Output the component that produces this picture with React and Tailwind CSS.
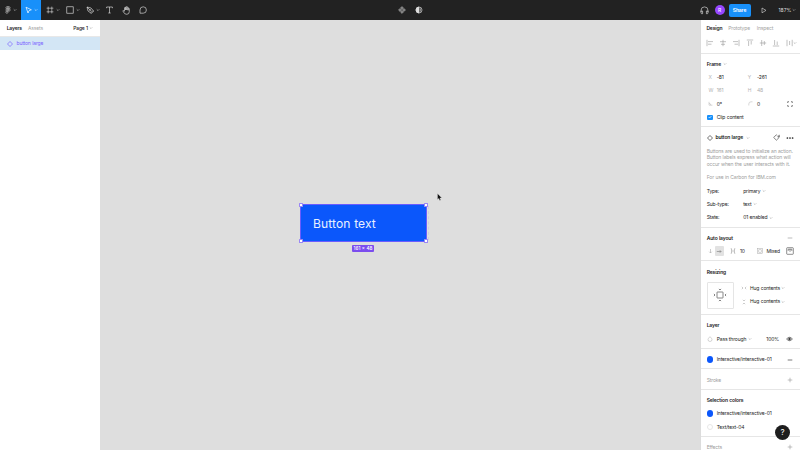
import React from "react";

function Svg({ w = 8, h = 8, vb, className = "", sw = 0.5, fill = "none", children }) {
  return (
    <svg width={w} height={h} viewBox={vb || `0 0 ${w} ${h}`} fill={fill} stroke="currentColor" strokeWidth={sw} className={`shrink-0 ${className}`}>
      {children}
    </svg>
  );
}

const Chevron = ({ className = "text-[#999]" }) => (
  <Svg w={4} h={4} sw={0.5} className={className}><path d="M.7 1.3 2 2.6 3.3 1.3" /></Svg>
);

const Diamond = ({ className = "", size = 6 }) => (
  <Svg w={size} h={size} vb="0 0 6 6" sw={0.7} className={className}><path d="M3 .5 5.5 3 3 5.5.5 3Z" /></Svg>
);

function Tool({ width, chevron = true, children }) {
  return (
    <div className={`flex h-full items-center justify-center gap-[2px] ${width}`}>
      {children}
      {chevron && <Chevron className="text-[#d8d8d8]" />}
    </div>
  );
}

function Toolbar() {
  return (
    <header className="flex h-5 shrink-0 items-center bg-[#222] text-[#dedede]">
      <Tool width="w-[21px]">
        <Svg w={6} h={8} sw={0.8} className="text-[#aaa]">
          <path d="M3 .7H2a1.1 1.1 0 0 0 0 2.2h1Zm0 2.2H2a1.1 1.1 0 0 0 0 2.2h1Zm0 2.2H2a1.1 1.1 0 1 0 1 1.1ZM3 .7h1a1.1 1.1 0 0 1 0 2.2H3Z" />
          <circle cx="4.1" cy="4" r="1.1" />
        </Svg>
      </Tool>
      <div className="flex h-full w-5 items-center justify-center gap-[2px] bg-[#1890fa] text-white">
        <Svg w={7} h={8} sw={0.7}><path d="m1 1.2 5.4 2.6-2.4.8-1 2.4Z" /></Svg>
        <Chevron className="text-white" />
      </div>
      <Tool width="w-[23px]">
        <Svg w={8} h={8} sw={0.6}><path d="M2.2.6v6.8M5.8.6v6.8M.6 2.2h6.8M.6 5.8h6.8" /></Svg>
      </Tool>
      <Tool width="w-[17px]">
        <Svg w={8} h={8} sw={0.65}><rect x=".8" y=".8" width="6.4" height="6.4" /></Svg>
      </Tool>
      <Tool width="w-[23px]">
        <Svg w={8} h={8} sw={0.65}>
          <path d="m1 1 1 4 2.6 1.8L7 4.4 5 2Z M1 1l3 3M4.6 6.8 5.2 7.5 7.7 5 7 4.4" />
          <circle cx="4.3" cy="4.2" r=".6" />
        </Svg>
      </Tool>
      <Tool width="w-[10px]" chevron={false}>
        <Svg w={7} h={8} sw={0.65}><path d="M.6 2.2V1h5.8v1.2M3.5 1v6M2.3 7h2.4" /></Svg>
      </Tool>
      <Tool width="w-[24px]" chevron={false}>
        <Svg w={9} h={9} sw={0.65}>
          <path d="M2.5 5V2q0-.6.6-.6t.6.6V4 1.2q0-.6.6-.6t.6.6V4 1.6q0-.6.6-.6t.6.6v2.7V2.8q0-.6.6-.6t.6.6V5.5Q7.3 8.3 4.8 8.3T1.5 6L.8 4.8q.5-.8 1.7.6" />
        </Svg>
      </Tool>
      <Tool width="w-[9px]" chevron={false}>
        <Svg w={8} h={8} sw={0.65}><path d="M1 7.2V4A3.2 3.2 0 1 1 4.2 7.2Z" /></Svg>
      </Tool>
      <div className="flex flex-1 items-center pl-[251px]">
        <Svg w={8} h={8} sw={0.45} className="text-[#999]">
          <path fill="#888" d="m4 .4 1.6 1.6L4 3.6 2.4 2ZM4 4.4l1.6 1.6L4 7.6 2.4 6ZM2 2.4l1.6 1.6L2 5.6.4 4ZM6 2.4l1.6 1.6L6 5.6 4.4 4Z" />
        </Svg>
        <Svg w={8} h={8} sw={0.65} className="ml-[9px]">
          <circle cx="4" cy="4" r="3" /><path fill="#ddd" d="M4 1a3 3 0 0 0 0 6Z" /><path d="M5.3 2.3v3.4" />
        </Svg>
      </div>
      <div className="flex w-[100.5px] items-center">
        <Svg w={9} h={9} sw={0.65}>
          <path d="M1 6V4.4a3.5 3.5 0 0 1 7 0V6M1 5h1.6v2.7H1.5L1 7ZM8 5H6.4v2.7h1.1L8 7Z" />
        </Svg>
        <div className="ml-[6px] flex size-[10px] items-center justify-center rounded-full bg-[#9747ff] text-[5px] text-white">R</div>
        <div className="ml-[4px] flex h-[13px] w-[22px] items-center justify-center rounded-[2px] bg-[#1890fa] text-[5px] font-semibold tracking-[-0.1px] text-white">Share</div>
        <Svg w={6} h={7} sw={0.6} className="ml-[10px]"><path d="M1 1v4.8l4-2.4Z" /></Svg>
        <span className="ml-[12px] text-[5px] tracking-normal">187%</span>
        <Chevron className="ml-[1px] text-[#c8c8c8]" />
      </div>
    </header>
  );
}

function LeftPanel() {
  return (
    <aside className="w-[100px] shrink-0 bg-white">
      <div className="flex h-[17px] items-center border-b border-[#e8e8e8] pl-[6.7px] pr-[7px]">
        <span className="w-[21.3px] font-semibold">Layers</span>
        <span className="text-[#a6a6a6]">Assets</span>
        <span className="ml-auto mr-[1px] font-medium">Page 1</span>
        <Chevron />
      </div>
      <div className="flex h-[13px] items-center gap-[3.5px] bg-[#d3e6f5] pl-[7px] text-[#7b61ff]">
        <Diamond />
        <span>button large</span>
      </div>
    </aside>
  );
}

function Canvas() {
  return (
    <main className="relative flex-1 overflow-hidden bg-[#dedede]">
      <div className="absolute left-[200px] top-[184px] flex h-[38px] w-[127px] items-center border border-[#6a5cff] bg-[#0b57fb] pl-[12px] pt-[2px] text-[12.1px] tracking-[0.08px] text-[#e9f0ff]">
        Button text
        <i className="absolute -left-[2px] -top-[2px] size-[4px] rounded-[0.5px] border border-[#9a87f5] bg-white" />
        <i className="absolute -right-[2px] -top-[2px] size-[4px] rounded-[0.5px] border border-[#9a87f5] bg-white" />
        <i className="absolute -bottom-[2px] -left-[2px] size-[4px] rounded-[0.5px] border border-[#9a87f5] bg-white" />
        <i className="absolute -bottom-[2px] -right-[2px] size-[4px] rounded-[0.5px] border border-[#9a87f5] bg-white" />
      </div>
      <div className="absolute left-[328px] top-[186px] h-[34px] w-px border-r border-dashed border-[#d0cbdf]" />
      <div className="absolute left-[252px] top-[225px] flex h-[7px] w-[22px] items-center justify-center rounded-[1px] bg-[#7b4dee] text-[4.7px] font-medium tracking-normal text-white">161 × 48</div>
      <svg className="absolute left-[337px] top-[173px]" width="6" height="8" viewBox="0 0 6 8">
        <path d="M.5.5v6l1.3-1.1.9 2.1 1.1-.5-.9-2h1.9Z" fill="#111" stroke="#eee" strokeWidth=".3" />
      </svg>
    </main>
  );
}

function Section({ className, children }) {
  return <section className={`border-b border-[#e6e6e6] pl-[5.7px] ${className}`}>{children}</section>;
}

function Row({ className = "", children }) {
  return <div className={`flex h-[13.33px] items-center ${className}`}>{children}</div>;
}

const Slot = ({ auto = true, children }) => <span className={`flex w-[20px] shrink-0 items-center justify-center ${auto ? "ml-auto" : ""}`}>{children}</span>;
const Minus = () => <Svg w={6} h={6} sw={0.7} className="text-[#444]"><path d="M.7 3h4.6" /></Svg>;
const Plus = () => <Svg w={6} h={6} sw={0.6} className="text-[#999]"><path d="M.7 3h4.6M3 .7v4.6" /></Svg>;

function Field({ a, av, b, bv, muted, end }) {
  return (
    <Row className={muted ? "text-[#adadad]" : ""}>
      <span className="flex w-[10px] pl-[1.7px] text-[#b3b3b3]">{a}</span>
      <span className="w-[31px]">{av}</span>
      <span className="flex w-[9.2px] text-[#b3b3b3]">{b}</span>
      <span>{bv}</span>
      {end && <Slot>{end}</Slot>}
    </Row>
  );
}

const ALIGN = [
  "M1 .8v6.4M2 2.6h5M2 5.2h3.5",
  "M4 .8v6.4M1 2.7h6M2 5.3h4",
  "M7 .8v6.4M6 2.6H1M6 5.2H2.5",
  "M.8 1h6.4M2.6 2v5M5.2 2v3.5",
  "M.8 4h6.4M2.7 1v6M5.3 2v4",
  "M.8 7h6.4M2.6 6V1M5.2 6V2.5",
  "M1 .8v6.4M6.2 .8v6.4M3.6 2v4",
];

const PROPS = [["Type:", "primary"], ["Sub-type:", "text"], ["State:", "01 enabled"]];

function RightPanel() {
  return (
    <aside className="w-[100px] shrink-0 overflow-hidden border-l border-[#dcdcdc] bg-white">
      <div className="flex h-[16.5px] items-center pl-[5.4px] text-[#a3a3a3]">
        <span className="w-[21.8px] font-semibold text-[#222]">Design</span>
        <span className="w-[28.6px]">Prototype</span>
        <span>Inspect</span>
      </div>
      <div className="flex h-[17.3px] items-start border-b border-[#e6e6e6] pl-[4.7px] pt-[2.9px] text-[#999]">
        {ALIGN.map((d) => (
          <span key={d} className="w-[13.33px] shrink-0"><Svg w={8} h={8} sw={0.6}><path d={d} /></Svg></span>
        ))}
        <span className="-ml-[5.8px] pt-[2px]"><Chevron /></span>
      </div>

      <Section className="h-[73.6px] pt-[3.5px]">
        <Row className="font-semibold">Frame <span className="ml-[1.5px]"><Chevron /></span></Row>
        <Field a="X" av="-81" b="Y" bv="-261" />
        <Field a="W" av="161" b="H" bv="48" muted />
        <Field
          a={<Svg w={5} h={5}><path d="M1 .8v3.4h3.4M1 2.4a1.8 1.8 0 0 1 1.8 1.8" /></Svg>}
          av="0°"
          b={<Svg w={5} h={5}><path d="M.8 4.5V3A2.2 2.2 0 0 1 3 .8h1.5" /></Svg>}
          bv="0"
          end={<Svg w={6} h={6} sw={0.65} className="text-[#444]"><path d="M.7 2V.7H2M4 .7h1.3V2M5.3 4v1.3H4M2 5.3H.7V4" /></Svg>}
        />
        <Row>
          <span className="ml-[0.8px] flex size-[5.5px] items-center justify-center rounded-[1px] bg-[#1890fa] text-white">
            <Svg w={4} h={4} sw={0.7}><path d="m.6 2 1 1L3.4 1.1" /></Svg>
          </span>
          <span className="ml-[3.7px]">Clip content</span>
        </Row>
      </Section>

      <Section className="h-[100.3px] pt-[3.5px]">
        <Row>
          <Diamond className="text-[#333]" />
          <span className="ml-[2.8px] mr-[3px] font-semibold">button large</span>
          <Chevron />
          <Svg w={7} h={7} sw={0.6} className="ml-auto text-[#333]">
            <path d="M3.9 1.1 3.3.8.7 3.5l2.7 2.7L6 3.6l-.3-.7M4.4 2.7h1.9V.8M6.2 2.6 5 1.3" />
          </Svg>
          <Slot auto={false}><Svg w={8} h={4} fill="#222" sw={0}><circle cx="1.4" cy="2" r=".85" /><circle cx="4" cy="2" r=".85" /><circle cx="6.6" cy="2" r=".85" /></Svg></Slot>
        </Row>
        <div className="h-[40px] whitespace-nowrap pt-[3.5px] leading-[6.67px] text-[#a0a0a0]">
          <p>Buttons are used to initialize an action.</p>
          <p>Button labels express what action will</p>
          <p>occur when the user interacts with it.</p>
          <p className="mt-[6.67px]">For use in Carbon for IBM.com</p>
        </div>
        {PROPS.map(([k, v]) => (
          <Row key={k}><span className="w-[36.5px]">{k}</span><span className="mr-[1.5px]">{v}</span><Chevron /></Row>
        ))}
      </Section>

      <Section className="h-[33.7px] pt-[3.5px]">
        <Row className="font-semibold">Auto layout<Slot><span className="opacity-50"><Minus /></span></Slot></Row>
        <Row>
          <span className="flex w-[8px] pl-[1px]"><Svg w={5} h={6} className="text-[#999]"><path d="M2.5 1v3.8M1.2 3.7l1.3 1.3 1.3-1.3" /></Svg></span>
          <span className="flex size-[10px] items-center justify-center rounded-[1px] bg-[#e2e2e2]"><Svg w={6} h={5} className="text-[#666]"><path d="M.8 2.5H5M3.8 1.2l1.3 1.3-1.3 1.3" /></Svg></span>
          <Svg w={6} h={6} className="ml-[6px] text-[#888]"><path d="M.7.7h.8v4.6H.7M5.3.7h-.8v4.6h.8M3 1.8v2.4" /></Svg>
          <span className="ml-[3.6px]">10</span>
          <Svg w={6} h={6} className="ml-[12px] text-[#aaa]"><rect x=".5" y=".5" width="5" height="5" /><rect x="1.8" y="1.8" width="2.4" height="2.4" /></Svg>
          <span className="ml-[3.6px]">Mixed</span>
          <Slot><Svg w={8} h={8} sw={0.6} className="text-[#444]"><rect x=".7" y=".7" width="6.6" height="6.6" rx=".6" /><path d="M2.2 2.2v1.7M4 2.2v2.6M5.8 2.2v1.7M2.2 2.2h3.6" /></Svg></Slot>
        </Row>
      </Section>

      <Section className="h-[53.9px] pt-[4px]">
        <Row className="font-semibold">Resizing</Row>
        <div className="mt-[2.8px] flex">
          <div className="flex h-[27.5px] w-[27.5px] items-center justify-center rounded-[1px] border border-[#e5e5e5]">
            <Svg w={14} h={14} sw={0.65} className="text-[#444]">
              <rect x="4" y="4" width="6" height="6" rx=".4" />
              <path d="m5.9.9 1.1 1.1L8.1.9M5.9 13.1 7 12l1.1 1.1M.9 5.9 2 7 .9 8.1M13.1 5.9 12 7l1.1 1.1" />
            </Svg>
          </div>
          <div className="ml-[6.7px] pt-[0.3px]">
            <Row>
              <Svg w={6} h={6} className="text-[#999]"><path d="m.8 1.8 1.2 1.2L.8 4.2M5.2 1.8 4 3l1.2 1.2" /></Svg>
              <span className="ml-[3px] mr-[1.5px]">Hug contents</span><Chevron />
            </Row>
            <Row>
              <Svg w={6} h={6} className="text-[#999]"><path d="M1.8.8 3 2 4.2.8M1.8 5.2 3 4l1.2 1.2" /></Svg>
              <span className="ml-[3px] mr-[1.5px]">Hug contents</span><Chevron />
            </Row>
          </div>
        </div>
      </Section>

      <Section className="h-[33.7px] pt-[3.7px]">
        <Row className="font-semibold">Layer</Row>
        <Row>
          <Svg w={6} h={6} className="text-[#aaa]"><path d="M3 .7Q5 2.5 5 3.5a2 2 0 0 1-4 0Q1 2.5 3 .7Z" /></Svg>
          <span className="ml-[4px] mr-[1.5px]">Pass through</span><Chevron />
          <span className="ml-auto">100%</span>
          <span className="flex w-[21px] justify-center"><Svg w={7} h={6} sw={0.65} className="text-[#333]"><path d="M.6 3Q3.5-.4 6.4 3 3.5 6.4.6 3Z" /><circle cx="3.5" cy="3" r=".9" fill="#333" /></Svg></span>
        </Row>
      </Section>

      <Section className="h-[20.3px] pt-[4px]">
        <Row><i className="mr-[3.3px] size-[6.7px] rounded-full bg-[#0b57fb]" />Interactive/interactive-01<Slot><Minus /></Slot></Row>
      </Section>
      <Section className="h-[20.4px] pt-[4px]">
        <Row className="text-[#9c9c9c]">Stroke<Slot><Plus /></Slot></Row>
      </Section>
      <Section className="h-[47px] pt-[4px]">
        <Row className="font-semibold">Selection colors</Row>
        <Row><i className="mr-[3.3px] size-[6.7px] rounded-full bg-[#0b57fb]" />Interactive/interactive-01</Row>
        <Row><i className="mr-[3.3px] size-[6.7px] rounded-full border border-[#e8e8e8] bg-white" />Text/text-04</Row>
      </Section>
      <Section className="h-[20.3px] pt-[4px]">
        <Row className="text-[#9c9c9c]">Effects<Slot><Plus /></Slot></Row>
      </Section>
    </aside>
  );
}

export default function App() {
  return (
    <div className="relative flex h-[450px] w-[800px] flex-col overflow-hidden bg-white font-['Inter','Liberation_Sans',sans-serif] text-[5px] leading-[6.67px] tracking-[-0.15px] text-[#1c1c1c] [word-spacing:0.25px]">
      <Toolbar />
      <div className="flex min-h-0 flex-1">
        <LeftPanel />
        <Canvas />
        <RightPanel />
      </div>
      <div className="absolute left-[775px] top-[425px] flex size-[15px] items-center justify-center rounded-full bg-[#1e1e1e] text-[8px] text-white">?</div>
    </div>
  );
}
